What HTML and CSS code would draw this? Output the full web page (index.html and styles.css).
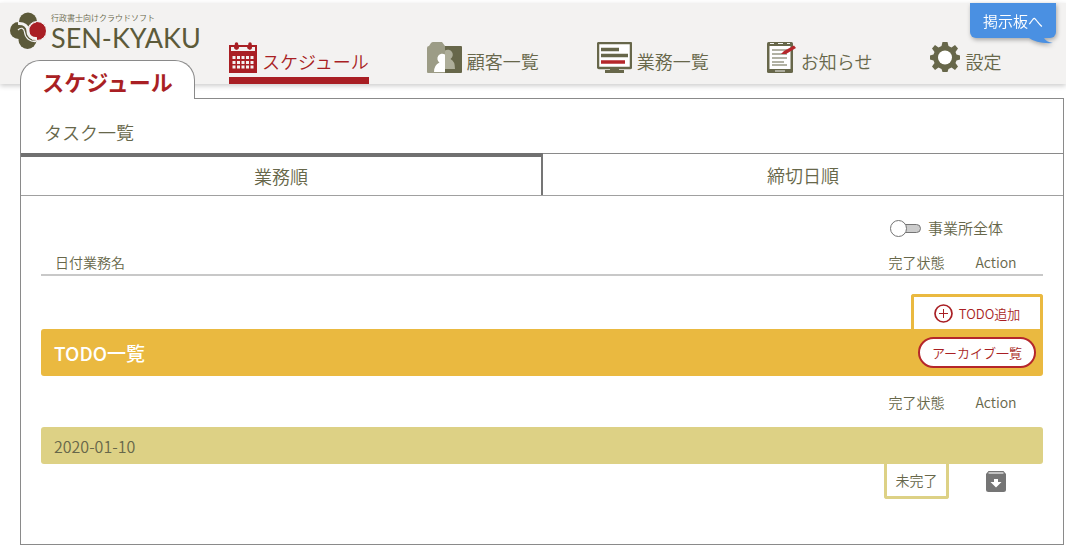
FILE: index.html
```
<!DOCTYPE html>
<html lang="ja">

<head>
    <meta charset="UTF-8">
    <title>スケジュール | SEN-KYAKU</title>
    <link rel="stylesheet" href="styles.css">
</head>

<body>
    <header class="header">
        <a href="#" class="logo">
            <svg class="logo-mark" width="36" height="37" viewBox="0 0 36 37">
                <circle cx="8.500" cy="18.500" r="8.500" fill="#5c5a3a" />
                <circle cx="18" cy="9.500" r="9" fill="#5c5a3a" />
                <circle cx="17.500" cy="28" r="9" fill="#5c5a3a" />
                <circle cx="27" cy="19" r="9.500" fill="#a91f24" stroke="#f3f2f1" />
                <path d="M18.500 18.500C19 14 22 11 26 10" fill="none" stroke="#f3f2f1" stroke-width="1.200" />
                <path d="M8 11.500C14 11 18 14 18 19C18 24 22 27 27 26.500" fill="none" stroke="#f3f2f1" stroke-width="3" />
                <path d="M8 18C11 15 14 16 14.500 20C15 26 20 30 26 29.500" fill="none" stroke="#f3f2f1" stroke-width="1.200" />
            </svg>
            <span class="logo-text">
                <span class="logo-sub">行政書士向けクラウドソフト</span>
                <span class="logo-name">SEN-KYAKU</span>
            </span>
        </a>

        <nav class="nav">
            <a href="#" class="nav-item active">
                <svg width="28" height="31" viewBox="0 0 28 31">
                    <path d="M0 3H28V31H0Z" fill="#a91f24" />
                    <path d="M2 5H5A2.500 2.500 0 0 0 10 5H18A2.500 2.500 0 0 0 23 5H26V9H2Z" fill="#f3f2f1" />
                    <path d="M7.500 2V6M21 2V6" stroke="#a91f24" stroke-width="3.500" stroke-linecap="round" />
                    <path d="M3.500 15.500H25M3.500 20.500H25M3.500 25H25" stroke="#f3f2f1" stroke-width="3" stroke-dasharray="3 1.500" />
                </svg>
                <span>スケジュール</span>
            </a>
            <a href="#" class="nav-item">
                <svg width="35" height="31" viewBox="0 0 35 31">
                    <path d="M18 4H34Q35 4 35 5V30Q35 31 34 31H18Z" fill="#67674a" />
                    <path d="M0 6Q0 4 2 4L4 1Q5 0 6 0H15L18 4V31H1Q0 31 0 30Z" fill="#9c9c86" />
                    <path d="M18 8.500A4.500 4.500 0 1 1 23.500 17Q28 19 28 27H18Z" fill="#aeae9a" />
                    <path d="M18 12.500A4.500 4.500 0 1 0 12.500 20.500Q7 23 7 30H18Z" fill="#fff" />
                </svg>
                <span>顧客一覧</span>
            </a>
            <a href="#" class="nav-item">
                <svg width="35" height="31" viewBox="0 0 35 31">
                    <rect x="1" y="1" width="33" height="25" rx="1" fill="#fff" stroke="#67674a" stroke-width="2.500" />
                    <path d="M4 7.500H22M4 13.500H31" stroke="#67674a" stroke-width="3.500" />
                    <path d="M4 20H28" stroke="#b5272b" stroke-width="3.500" />
                    <path d="M13 26H22V28H27V31H8V28H13Z" fill="#67674a" />
                </svg>
                <span>業務一覧</span>
            </a>
            <a href="#" class="nav-item">
                <svg width="29" height="31" viewBox="0 0 29 31">
                    <rect x="0" y="0" width="26" height="31" rx="1.500" fill="#67674a" />
                    <rect x="2.500" y="4" width="21" height="23" fill="#fff" />
                    <path d="M3 1.500H7M11 1.500H16M20 1.500H23M8 29H18" stroke="#f3f2f1" />
                    <path d="M5 8H20M5 12H20M5 16H20M5 20H17M5 23H20" stroke="#67674a" stroke-width="1.200" />
                    <path d="M14 12L17 9L27 3.500L29 6L19 12Z" fill="#b5272b" />
                </svg>
                <span>お知らせ</span>
            </a>
            <a href="#" class="nav-item">
                <svg width="30" height="31" viewBox="0 0 30 31">
                    <path d="M12.500 0H17.500L18.500 4L21.500 5.500L25 3L28 6.500L25.500 10L26.500 12.500L30 13.500V17.500L26.500 18.500L25.500 21L28 24.500L25 28L21.500 25.500L18.500 27L17.500 30H12.500L11.500 27L8.500 25.500L5 28L2 24.500L4.500 21L3.500 18.500L0 17.500V13.500L3.500 12.500L4.500 10L2 6.500L5 3L8.500 5.500L11.500 4Z" fill="#67674a" />
                    <circle cx="15" cy="15.500" r="7" fill="#fff" />
                </svg>
                <span>設定</span>
            </a>
        </nav>

        <a href="#" class="board-link">
            掲示板へ
            <svg class="board-tail" width="24" height="8" viewBox="0 0 24 8">
                <path d="M0 0Q8 6 24 5Q17 4 15 0Z" fill="#4a90e2" />
            </svg>
        </a>
    </header>

    <main class="main">
        <h1 class="page-tab">スケジュール</h1>

        <section class="panel">
            <h2 class="panel-title">タスク一覧</h2>

            <div class="tabs">
                <button type="button" class="tab selected">業務順</button>
                <button type="button" class="tab">締切日順</button>
            </div>

            <div class="content">
                <label class="office-toggle">
                    <input type="checkbox" class="switch">
                    事業所全体
                </label>

                <table class="task-table ruled">
                    <thead>
                        <tr>
                            <th class="col-name">日付業務名</th>
                            <th class="col-status">完了状態</th>
                            <th class="col-action">Action</th>
                        </tr>
                    </thead>
                </table>

                <button type="button" class="add-todo">
                    <svg width="19" height="19" viewBox="0 0 19 19" fill="none" stroke="#a91f24">
                        <circle cx="9.500" cy="9.500" r="8.500" stroke-width="1.700" />
                        <path d="M5 9.500H14M9.500 5V14" />
                    </svg>
                    TODO追加
                </button>

                <div class="todo-bar">
                    <h3 class="todo-title">TODO一覧</h3>
                    <button type="button" class="archive-list">アーカイブ一覧</button>
                </div>

                <table class="task-table">
                    <thead>
                        <tr>
                            <th class="col-name"></th>
                            <th class="col-status">完了状態</th>
                            <th class="col-action">Action</th>
                        </tr>
                    </thead>
                    <tbody>
                        <tr>
                            <td class="date" colspan="3">2020-01-10</td>
                        </tr>
                        <tr>
                            <td></td>
                            <td><button type="button" class="status">未完了</button></td>
                            <td class="action">
                                <button type="button" class="archive" aria-label="アーカイブ">
                                    <svg width="20" height="21" viewBox="0 0 20 21">
                                        <path d="M2.500 0H17.500L20 3V18.500Q20 21 17.500 21H2.500Q0 21 0 18.500V3Z" fill="#757575" />
                                        <path d="M2.500 2H17.500" stroke="#ddd" stroke-width="1.500" />
                                        <path d="M8 8H12V11H15.500L10 16.500L4.500 11H8Z" fill="#fff" />
                                    </svg>
                                </button>
                            </td>
                        </tr>
                    </tbody>
                </table>
            </div>
        </section>
    </main>
</body>

</html>
```

FILE: styles.css
```
* {
    box-sizing: border-box;
}

body {
    margin: 0;
    padding-top: 3px;
    background: #fff;
    color: #67674a;
    font-family: "Noto Sans CJK JP", sans-serif;
    font-weight: 350;
    font-size: 14px;
}

a {
    color: inherit;
    text-decoration: none;
}

button {
    font: inherit;
    color: inherit;
    background: #fff;
    border: none;
    padding: 0;
    cursor: pointer;
}

svg {
    display: block;
    flex-shrink: 0;
}

/* header */
.header {
    position: relative;
    display: flex;
    gap: 32px;
    height: 81px;
    padding-left: 10px;
    background: #f3f2f1;
    box-shadow: 0 2px 5px rgba(0, 0, 0, 0.2);
}

.logo {
    display: flex;
    align-items: flex-start;
    gap: 5px;
    width: 187px;
    padding-top: 9px;
}

.logo-text {
    display: flex;
    flex-direction: column;
    white-space: nowrap;
}

.logo-sub {
    font-size: 8px;
    line-height: 12px;
}

.logo-name {
    font-family: Lato, sans-serif;
    font-weight: 400;
    font-size: 27px;
    line-height: 28px;
    color: #5c5a3a;
}

.nav {
    display: flex;
    align-items: flex-end;
    gap: 58px;
}

.nav-item {
    display: flex;
    align-items: flex-end;
    gap: 5px;
    padding-bottom: 4px;
    border-bottom: 7px solid transparent;
    font-size: 18px;
    line-height: 24px;
    white-space: nowrap;
}

.nav-item.active {
    color: #a91f24;
    border-bottom-color: #a91f24;
}

.board-link {
    position: absolute;
    top: 0;
    right: 10px;
    padding: 0 13px;
    border-radius: 0 0 6px 6px;
    background: #4a90e2;
    color: #fff;
    font-size: 15px;
    line-height: 35px;
    filter: drop-shadow(1px 2px 2px rgba(0, 0, 0, 0.3));
}

.board-tail {
    position: absolute;
    top: 100%;
    right: 3px;
}

/* page */
.main {
    position: relative;
    margin: -24px 2px 0 20px;
}

.page-tab {
    position: relative;
    z-index: 1;
    width: 175px;
    height: 39px;
    margin: 0 0 -1px;
    border: 1px solid #8a8a8a;
    border-bottom: none;
    border-radius: 20px 20px 0 0;
    background: #fff;
    color: #a91f24;
    font-size: 22px;
    font-weight: 700;
    line-height: 40px;
    text-align: center;
}

.panel {
    border: 1px solid #8a8a8a;
    background: #fff;
}

.panel-title {
    margin: 0;
    padding: 12px 23px 0;
    font-size: 18px;
    font-weight: 350;
    line-height: 42px;
}

.tabs {
    display: flex;
    border-bottom: 1px solid #a0a0a0;
}

.tab {
    flex: 1;
    height: 42px;
    border-top: 1px solid #8a8a8a;
    font-size: 18px;
}

.tab.selected {
    border-top: 4px solid #707070;
    border-right: 2px solid #757575;
}

.content {
    display: flex;
    flex-direction: column;
    padding: 20px 20px 45px;
}

.office-toggle {
    display: flex;
    align-items: center;
    align-self: flex-end;
    gap: 7px;
    padding-right: 40px;
    font-size: 15px;
    line-height: 24px;
}

.switch {
    appearance: none;
    display: flex;
    align-items: center;
    width: 30px;
    height: 9px;
    margin: 0;
    border: 1px solid #757575;
    border-radius: 5px;
    background: #ccc;
}

.switch::before {
    content: "";
    width: 15px;
    height: 15px;
    flex-shrink: 0;
    margin-left: -2px;
    border: 1px solid #757575;
    border-radius: 50%;
    background: #fff;
}

.switch:checked::before {
    margin-left: 15px;
}

.task-table {
    width: 100%;
    border-collapse: collapse;
    table-layout: fixed;
}

.task-table.ruled {
    margin: 11px 0 18px;
    border-bottom: 2px solid #c8c8c8;
}

.task-table th {
    height: 51px;
    padding: 0;
    font-weight: 350;
}

.task-table.ruled th {
    height: 23px;
    line-height: 23px;
}

.task-table td {
    padding: 0;
}

.task-table .col-name {
    padding-left: 14px;
    text-align: left;
}

.col-status {
    width: 65px;
}

.col-action {
    width: 94px;
}

.add-todo {
    display: flex;
    align-items: center;
    justify-content: center;
    align-self: flex-end;
    gap: 6px;
    width: 132px;
    height: 35px;
    border: 3px solid #eab940;
    border-bottom: none;
    border-radius: 3px 3px 0 0;
    color: #a91f24;
    font-size: 13px;
}

.todo-bar {
    display: flex;
    align-items: center;
    justify-content: space-between;
    height: 47px;
    padding: 0 7px 0 13px;
    border-radius: 3px 0 3px 3px;
    background: #eab940;
}

.todo-title {
    margin: 0;
    color: #fff;
    font-size: 19px;
    font-weight: 500;
    line-height: 24px;
}

.archive-list {
    width: 118px;
    height: 31px;
    border: 2px solid #b5272b;
    border-radius: 16px;
    color: #a91f24;
    font-size: 13px;
    line-height: 20px;
}

.task-table .date {
    height: 37px;
    padding-left: 13px;
    border-radius: 3px;
    background: #ddd185;
    font-size: 16px;
}

.status {
    display: block;
    width: 100%;
    height: 35px;
    border: 3px solid #ddd185;
    border-top: none;
    border-radius: 0 0 3px 3px;
}

.archive {
    display: block;
    margin: 0 auto;
}
```
